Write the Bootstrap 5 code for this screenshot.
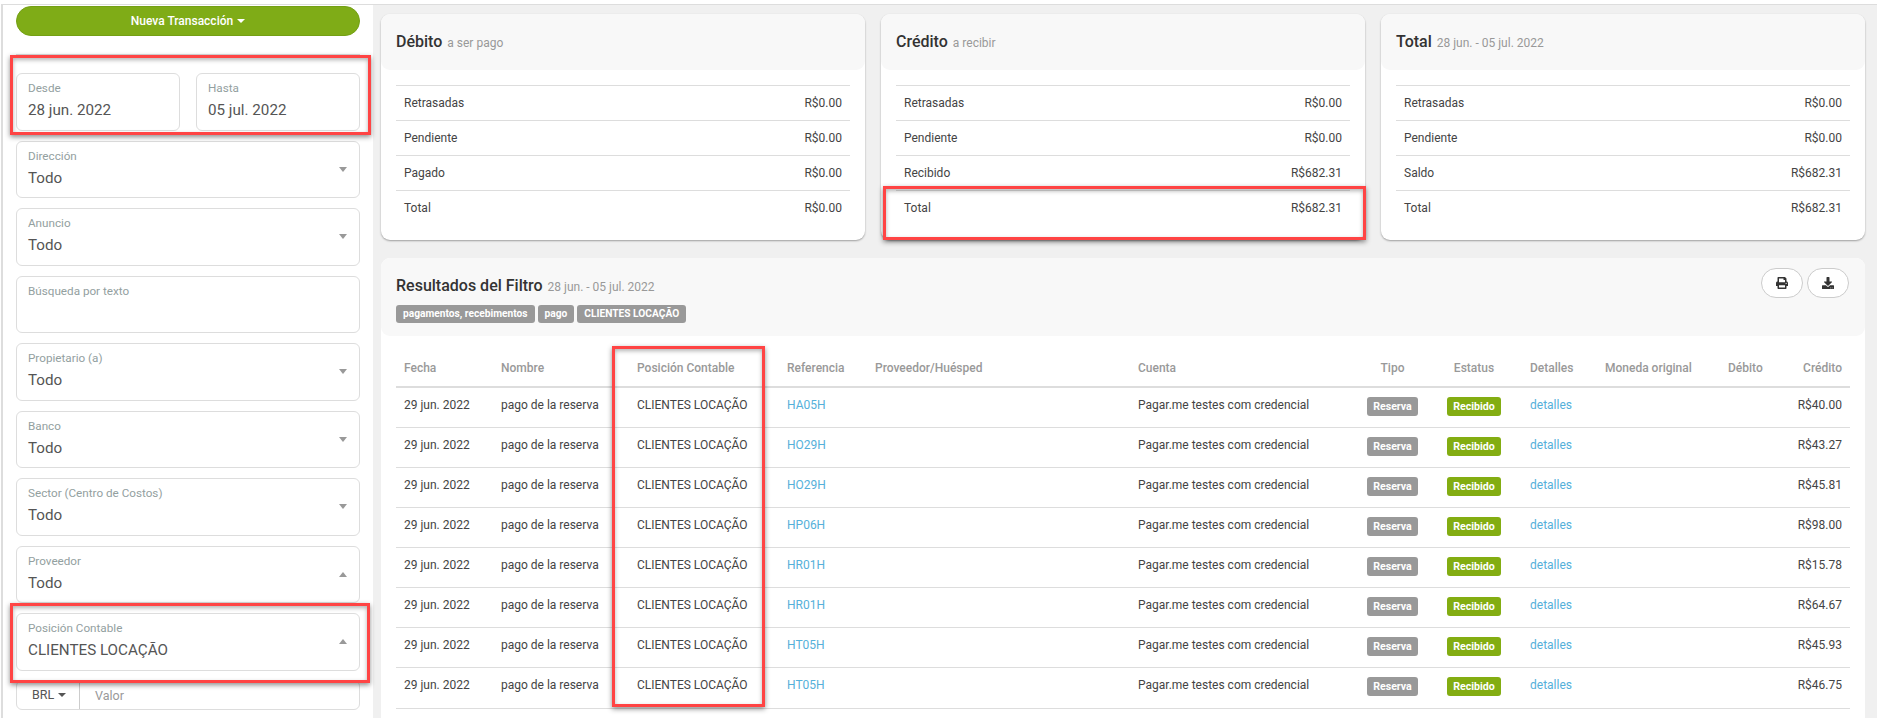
<!DOCTYPE html>
<html lang="es">
<head>
<meta charset="utf-8">
<title>Transacciones</title>
<link href="https://cdn.jsdelivr.net/npm/bootstrap@5.3.0/dist/css/bootstrap.min.css" rel="stylesheet">
<style>
html,body{height:718px;overflow:hidden;background:#fff}
body{font-family:Roboto,"Liberation Sans",sans-serif;font-size:12px;color:#444;padding:4px 0 0 1px;position:relative}
.shell{height:714px;border-top:1px solid #ddd;border-left:2px solid #ddd;overflow:hidden}
.side{width:370px;flex:none;padding:1px 13px 0 13px;background:#fff}
.btn-new{display:block;width:100%;height:30px;padding:0;background:#7fac17;border:1px solid #74a014;border-radius:15px;color:#fff;font-size:12px;font-weight:500;line-height:27px}
.btn-new:hover{background:#7fac17;color:#fff}
.btn-new::after,.cur::after{border-top-width:4px;border-left-width:4px;border-right-width:4px;margin-left:4px;vertical-align:2px}
.side-rule{border-top:1px solid #ddd;margin:18px 0;opacity:1}
.fbox{height:57.5px;margin-bottom:10px;border:1px solid #ddd;border-radius:6px;padding:6px 12px 0 11px;position:relative;background:#fff}
.flabel{font-size:11.7px;line-height:17px;color:#93a0a0;display:block}
.fvalue{font-size:15.2px;line-height:22px;margin-top:2px;color:#555;display:block}
.caret-d,.caret-u{width:0;height:0;border-left:4px solid transparent;border-right:4px solid transparent;position:absolute;right:12px;top:25px}
.caret-d{border-top:5px solid #999}
.caret-u{border-bottom:5px solid #999}
.money{height:29.5px;border:1px solid #ddd;border-radius:6px;margin-top:-.5px}
.cur{width:63px;border:0;border-right:1px solid #ccc;padding:0 0 0 15px;line-height:28px;color:#555;font-size:12.5px;border-radius:0}
.val{padding-left:15px;line-height:29px;color:#999;font-size:12.5px}
.content{flex:1;min-width:0;background:#f0f0f0;padding:9px 12px 0 8px;overflow:hidden}
.sum{border:0;border-radius:9px;box-shadow:0 1px 2px rgba(0,0,0,.35);height:226px}
.sum .card-header,.res .card-header{background:#f8f8f8;border:0;border-radius:9px;padding:0 15px}
.sum .card-header{height:56px;display:flex;align-items:center}
.ttl{font-size:16px;font-weight:500;color:#333;margin:0;line-height:20px}
.ttl small{font-size:12px;font-weight:400;color:#999;margin-left:1px}
.sum .card-body{padding:15px 15px 0}
.sumtab{margin:0;--bs-table-bg:transparent;--bs-table-color:#444}
.sumtab td{height:35px;padding:0 8px;border-top:1px solid #ddd;border-bottom:0;font-size:12px;vertical-align:middle}
.res{border:0;border-radius:9px;margin-top:18px;height:480px}
.res .card-header{height:78px;padding-top:18px;position:relative}
.tags{margin-top:8px;display:flex;gap:3px}
.tags .badge{background:#999;font-size:10.2px;font-weight:700;border-radius:3px;height:18px;line-height:18px;padding:0 7px}
.tools{position:absolute;top:10px;right:16px;display:flex;gap:4px}
.tool{width:42px;height:30px;border:1px solid #ccc;border-radius:15px;background:#fff;padding:0;display:flex;align-items:center;justify-content:center}
.tool svg{width:12px;height:12px;fill:#333}
.res .card-body{padding:11px 15px 0}
.restab{table-layout:fixed;width:1454px;margin:0;--bs-table-bg:transparent;--bs-table-color:#444}
.restab th{font-size:12px;font-weight:500;color:#999;height:40px;padding:0 8px 9px;vertical-align:bottom;border-bottom:2px solid #ddd;white-space:nowrap}
.restab td{height:40.14px;padding:9px 8px 0;vertical-align:top;border-bottom:1px solid #ddd;font-size:12px;line-height:17px;white-space:nowrap}
.c1{width:97px}.c2{width:136px}.c3{width:150px}.c4{width:88px}.c5{width:263px}.c6{width:229px}.c7{width:67px}.c8{width:96px}.c9{width:75px}.c10{width:123px}.c11{width:50px}.c12{width:80px}
.restab a{color:#55b0da;text-decoration:none}
.tag-b{display:block;margin:0 auto;height:19px;line-height:19px;padding:0;border-radius:3px;font-size:10.6px;font-weight:700;color:#fff}
.tag-grey{background:#999;width:51px}
.tag-green{background:#83ad12;width:54px}
.mark-box{position:absolute;border:3px solid #f44;box-shadow:0 2px 5px rgba(0,0,0,.45),inset 0 2px 4px rgba(0,0,0,.3);pointer-events:none}
.mb1{left:10px;top:55px;width:361px;height:80px}
.mb2{left:10px;top:603px;width:360px;height:80px}
.mb3{left:883px;top:186px;width:483px;height:54px}
.mb4{left:612px;top:346px;width:153px;height:361px}
</style>
</head>
<body>
<div class="shell d-flex">
  <aside class="side">
    <button class="btn btn-new dropdown-toggle" type="button">Nueva Transacción</button>
    <hr class="side-rule">
    <div class="row g-3 fields-top">
      <div class="col-6"><div class="fbox"><span class="flabel">Desde</span><span class="fvalue">28 jun. 2022</span></div></div>
      <div class="col-6"><div class="fbox"><span class="flabel">Hasta</span><span class="fvalue">05 jul. 2022</span></div></div>
    </div>
    <div class="fbox"><span class="flabel">Dirección</span><span class="fvalue">Todo</span><i class="caret-d"></i></div>
    <div class="fbox"><span class="flabel">Anuncio</span><span class="fvalue">Todo</span><i class="caret-d"></i></div>
    <div class="fbox"><span class="flabel">Búsqueda por texto</span></div>
    <div class="fbox"><span class="flabel">Propietario (a)</span><span class="fvalue">Todo</span><i class="caret-d"></i></div>
    <div class="fbox"><span class="flabel">Banco</span><span class="fvalue">Todo</span><i class="caret-d"></i></div>
    <div class="fbox"><span class="flabel">Sector (Centro de Costos)</span><span class="fvalue">Todo</span><i class="caret-d"></i></div>
    <div class="fbox"><span class="flabel">Proveedor</span><span class="fvalue">Todo</span><i class="caret-u"></i></div>
    <div class="fbox"><span class="flabel">Posición Contable</span><span class="fvalue">CLIENTES LOCAÇÃO</span><i class="caret-u"></i></div>
    <div class="money d-flex">
      <button class="btn cur dropdown-toggle text-start" type="button">BRL</button>
      <div class="val">Valor</div>
    </div>
  </aside>
  <main class="content">
    <div class="row g-3">
      <div class="col-4">
        <div class="card sum">
          <div class="card-header"><h3 class="ttl">Débito <small>a ser pago</small></h3></div>
          <div class="card-body">
            <table class="table sumtab"><tbody>
              <tr><td>Retrasadas</td><td class="text-end">R$0.00</td></tr>
              <tr><td>Pendiente</td><td class="text-end">R$0.00</td></tr>
              <tr><td>Pagado</td><td class="text-end">R$0.00</td></tr>
              <tr><td>Total</td><td class="text-end">R$0.00</td></tr>
            </tbody></table>
          </div>
        </div>
      </div>
      <div class="col-4">
        <div class="card sum">
          <div class="card-header"><h3 class="ttl">Crédito <small>a recibir</small></h3></div>
          <div class="card-body">
            <table class="table sumtab"><tbody>
              <tr><td>Retrasadas</td><td class="text-end">R$0.00</td></tr>
              <tr><td>Pendiente</td><td class="text-end">R$0.00</td></tr>
              <tr><td>Recibido</td><td class="text-end">R$682.31</td></tr>
              <tr><td>Total</td><td class="text-end">R$682.31</td></tr>
            </tbody></table>
          </div>
        </div>
      </div>
      <div class="col-4">
        <div class="card sum">
          <div class="card-header"><h3 class="ttl">Total <small>28 jun. - 05 jul. 2022</small></h3></div>
          <div class="card-body">
            <table class="table sumtab"><tbody>
              <tr><td>Retrasadas</td><td class="text-end">R$0.00</td></tr>
              <tr><td>Pendiente</td><td class="text-end">R$0.00</td></tr>
              <tr><td>Saldo</td><td class="text-end">R$682.31</td></tr>
              <tr><td>Total</td><td class="text-end">R$682.31</td></tr>
            </tbody></table>
          </div>
        </div>
      </div>
    </div>
    <div class="card res">
      <div class="card-header">
        <h3 class="ttl">Resultados del Filtro <small>28 jun. - 05 jul. 2022</small></h3>
        <div class="tags"><span class="badge">pagamentos, recebimentos</span><span class="badge">pago</span><span class="badge">CLIENTES LOCAÇÃO</span></div>
        <div class="tools">
          <button class="tool" type="button" aria-label="Imprimir"><svg viewBox="0 0 512 512"><path d="M448 192V77.25c0-8.49-3.37-16.62-9.37-22.63L393.37 9.37c-6-6-14.14-9.37-22.63-9.37H96C78.33 0 64 14.33 64 32v160c-35.35 0-64 28.65-64 64v112c0 8.84 7.16 16 16 16h48v96c0 17.67 14.33 32 32 32h320c17.67 0 32-14.33 32-32v-96h48c8.84 0 16-7.16 16-16V256c0-35.35-28.65-64-64-64zm-64 256H128v-96h256v96zm0-224H128V64h192v48c0 8.84 7.16 16 16 16h48v96zm48 72c-13.25 0-24-10.75-24-24 0-13.26 10.75-24 24-24s24 10.74 24 24c0 13.25-10.75 24-24 24z"/></svg></button>
          <button class="tool" type="button" aria-label="Descargar"><svg viewBox="0 0 512 512"><path d="M216 0h80c13.3 0 24 10.7 24 24v168h87.7c17.8 0 26.7 21.5 14.1 34.1L269.7 378.3c-7.5 7.5-19.8 7.5-27.3 0L90.1 226.1c-12.6-12.6-3.7-34.1 14.1-34.1H192V24c0-13.3 10.7-24 24-24zm296 376v112c0 13.3-10.7 24-24 24H24c-13.3 0-24-10.7-24-24V376c0-13.3 10.7-24 24-24h146.7l49 49c20.1 20.1 52.5 20.1 72.6 0l49-49H488c13.3 0 24 10.7 24 24zm-124 88c0-11-9-20-20-20s-20 9-20 20 9 20 20 20 20-9 20-20zm64 0c0-11-9-20-20-20s-20 9-20 20 9 20 20 20 20-9 20-20z"/></svg></button>
        </div>
      </div>
      <div class="card-body">
        <table class="table restab">
          <colgroup><col class="c1"><col class="c2"><col class="c3"><col class="c4"><col class="c5"><col class="c6"><col class="c7"><col class="c8"><col class="c9"><col class="c10"><col class="c11"><col class="c12"></colgroup>
          <thead><tr><th>Fecha</th><th>Nombre</th><th>Posición Contable</th><th>Referencia</th><th>Proveedor/Huésped</th><th>Cuenta</th><th class="text-center">Tipo</th><th class="text-center">Estatus</th><th>Detalles</th><th>Moneda original</th><th>Débito</th><th class="text-end">Crédito</th></tr></thead>
          <tbody>
            <tr><td>29 jun. 2022</td><td>pago de la reserva</td><td>CLIENTES LOCAÇÃO</td><td><a href="#">HA05H</a></td><td></td><td>Pagar.me testes com credencial</td><td><span class="badge tag-b tag-grey">Reserva</span></td><td><span class="badge tag-b tag-green">Recibido</span></td><td><a href="#">detalles</a></td><td></td><td></td><td class="text-end">R$40.00</td></tr>
            <tr><td>29 jun. 2022</td><td>pago de la reserva</td><td>CLIENTES LOCAÇÃO</td><td><a href="#">HO29H</a></td><td></td><td>Pagar.me testes com credencial</td><td><span class="badge tag-b tag-grey">Reserva</span></td><td><span class="badge tag-b tag-green">Recibido</span></td><td><a href="#">detalles</a></td><td></td><td></td><td class="text-end">R$43.27</td></tr>
            <tr><td>29 jun. 2022</td><td>pago de la reserva</td><td>CLIENTES LOCAÇÃO</td><td><a href="#">HO29H</a></td><td></td><td>Pagar.me testes com credencial</td><td><span class="badge tag-b tag-grey">Reserva</span></td><td><span class="badge tag-b tag-green">Recibido</span></td><td><a href="#">detalles</a></td><td></td><td></td><td class="text-end">R$45.81</td></tr>
            <tr><td>29 jun. 2022</td><td>pago de la reserva</td><td>CLIENTES LOCAÇÃO</td><td><a href="#">HP06H</a></td><td></td><td>Pagar.me testes com credencial</td><td><span class="badge tag-b tag-grey">Reserva</span></td><td><span class="badge tag-b tag-green">Recibido</span></td><td><a href="#">detalles</a></td><td></td><td></td><td class="text-end">R$98.00</td></tr>
            <tr><td>29 jun. 2022</td><td>pago de la reserva</td><td>CLIENTES LOCAÇÃO</td><td><a href="#">HR01H</a></td><td></td><td>Pagar.me testes com credencial</td><td><span class="badge tag-b tag-grey">Reserva</span></td><td><span class="badge tag-b tag-green">Recibido</span></td><td><a href="#">detalles</a></td><td></td><td></td><td class="text-end">R$15.78</td></tr>
            <tr><td>29 jun. 2022</td><td>pago de la reserva</td><td>CLIENTES LOCAÇÃO</td><td><a href="#">HR01H</a></td><td></td><td>Pagar.me testes com credencial</td><td><span class="badge tag-b tag-grey">Reserva</span></td><td><span class="badge tag-b tag-green">Recibido</span></td><td><a href="#">detalles</a></td><td></td><td></td><td class="text-end">R$64.67</td></tr>
            <tr><td>29 jun. 2022</td><td>pago de la reserva</td><td>CLIENTES LOCAÇÃO</td><td><a href="#">HT05H</a></td><td></td><td>Pagar.me testes com credencial</td><td><span class="badge tag-b tag-grey">Reserva</span></td><td><span class="badge tag-b tag-green">Recibido</span></td><td><a href="#">detalles</a></td><td></td><td></td><td class="text-end">R$45.93</td></tr>
            <tr><td>29 jun. 2022</td><td>pago de la reserva</td><td>CLIENTES LOCAÇÃO</td><td><a href="#">HT05H</a></td><td></td><td>Pagar.me testes com credencial</td><td><span class="badge tag-b tag-grey">Reserva</span></td><td><span class="badge tag-b tag-green">Recibido</span></td><td><a href="#">detalles</a></td><td></td><td></td><td class="text-end">R$46.75</td></tr>
          </tbody>
        </table>
      </div>
    </div>
  </main>
</div>
<div class="mark-box mb1"></div>
<div class="mark-box mb2"></div>
<div class="mark-box mb3"></div>
<div class="mark-box mb4"></div>
<script src="https://cdn.jsdelivr.net/npm/bootstrap@5.3.0/dist/js/bootstrap.bundle.min.js"></script>
</body>
</html>
